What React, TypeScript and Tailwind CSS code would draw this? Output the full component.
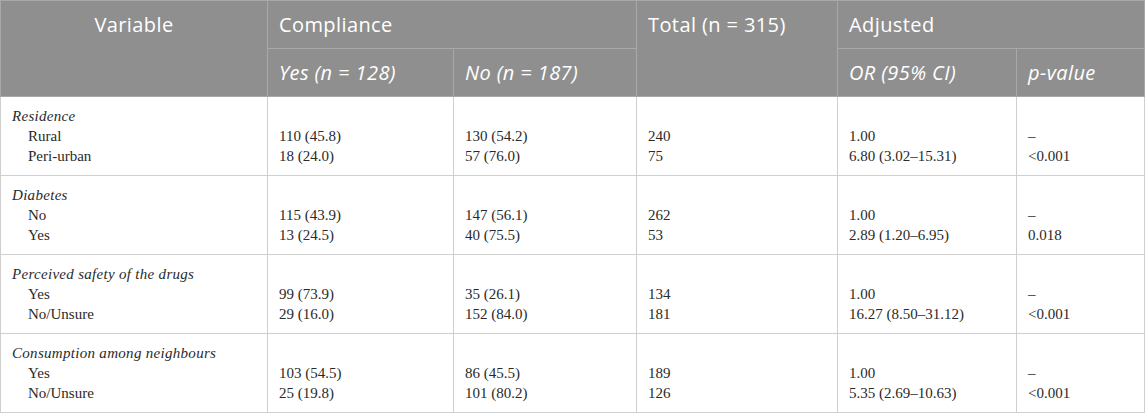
import React from "react";

type Group = { title: string; rows: { label: string; yes: string; no: string; total: string; or: string; p: string }[] };

const groups: Group[] = [
  {
    title: "Residence",
    rows: [
      { label: "Rural", yes: "110 (45.8)", no: "130 (54.2)", total: "240", or: "1.00", p: "–" },
      { label: "Peri-urban", yes: "18 (24.0)", no: "57 (76.0)", total: "75", or: "6.80 (3.02–15.31)", p: "<0.001" },
    ],
  },
  {
    title: "Diabetes",
    rows: [
      { label: "No", yes: "115 (43.9)", no: "147 (56.1)", total: "262", or: "1.00", p: "–" },
      { label: "Yes", yes: "13 (24.5)", no: "40 (75.5)", total: "53", or: "2.89 (1.20–6.95)", p: "0.018" },
    ],
  },
  {
    title: "Perceived safety of the drugs",
    rows: [
      { label: "Yes", yes: "99 (73.9)", no: "35 (26.1)", total: "134", or: "1.00", p: "–" },
      { label: "No/Unsure", yes: "29 (16.0)", no: "152 (84.0)", total: "181", or: "16.27 (8.50–31.12)", p: "<0.001" },
    ],
  },
  {
    title: "Consumption among neighbours",
    rows: [
      { label: "Yes", yes: "103 (54.5)", no: "86 (45.5)", total: "189", or: "1.00", p: "–" },
      { label: "No/Unsure", yes: "25 (19.8)", no: "101 (80.2)", total: "126", or: "5.35 (2.69–10.63)", p: "<0.001" },
    ],
  },
];

const hdBase = "border border-[#a8a8a8] bg-[#8f8f8f] text-white font-normal align-top px-[11px] pt-[12px] h-[48px] text-[20px] leading-[24px] tracking-[0.4px]";
const hd = hdBase + " text-left";
const td = "border border-[#cfcfcf] align-top px-[11px] pt-[9px] pb-[9px] text-[15px] leading-[20px] text-[#2a2a2a]";

function Col({ vals }: { vals: string[] }) {
  return (
    <>
      <div>&nbsp;</div>
      {vals.map((v, i) => (
        <div key={i}>{v}</div>
      ))}
    </>
  );
}

export default function App() {
  return (
    <div className="w-[1145px] bg-white">
      <table
        className="w-[1144px] border-collapse table-fixed"
        style={{ fontFamily: "'Liberation Serif', serif" }}
      >
        <colgroup>
          <col className="w-[267px]" />
          <col className="w-[186px]" />
          <col className="w-[183px]" />
          <col className="w-[201px]" />
          <col className="w-[179px]" />
          <col className="w-[128px]" />
        </colgroup>
        <thead style={{ fontFamily: "'Open Sans', Lato, sans-serif" }}>
          <tr>
            <th rowSpan={2} className={hdBase + " text-center"}>Variable</th>
            <th colSpan={2} className={hd}>Compliance</th>
            <th rowSpan={2} className={hd}>Total (n = 315)</th>
            <th colSpan={2} className={hd}>Adjusted</th>
          </tr>
          <tr>
            <th className={hd + " italic"}>Yes (n = 128)</th>
            <th className={hd + " italic"}>No (n = 187)</th>
            <th className={hd + " italic"}>OR (95% CI)</th>
            <th className={hd + " italic"}>p-value</th>
          </tr>
        </thead>
        <tbody>
          {groups.map((g) => (
            <tr key={g.title}>
              <td className={td}>
                <div className="italic tracking-[0.3px]">{g.title}</div>
                {g.rows.map((r) => (
                  <div key={r.label} className="pl-[16px]">{r.label}</div>
                ))}
              </td>
              <td className={td}><Col vals={g.rows.map((r) => r.yes)} /></td>
              <td className={td}><Col vals={g.rows.map((r) => r.no)} /></td>
              <td className={td}><Col vals={g.rows.map((r) => r.total)} /></td>
              <td className={td}><Col vals={g.rows.map((r) => r.or)} /></td>
              <td className={td}><Col vals={g.rows.map((r) => r.p)} /></td>
            </tr>
          ))}
        </tbody>
      </table>
    </div>
  );
}
